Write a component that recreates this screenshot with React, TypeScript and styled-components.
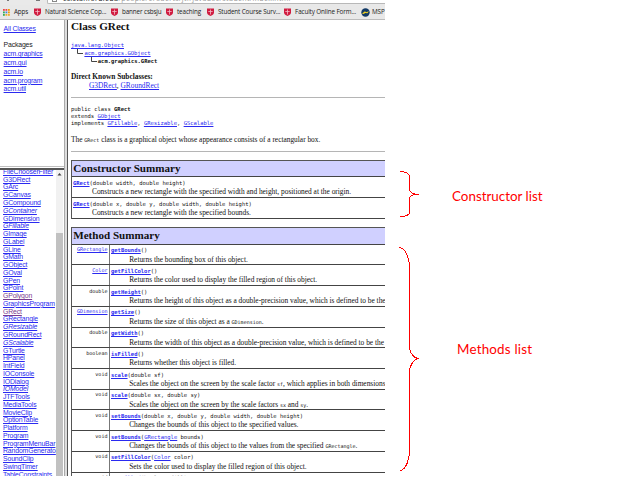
import React from "react";
import styled, { createGlobalStyle, css } from "styled-components";

const Global = createGlobalStyle`
  html, body { margin: 0; padding: 0; background: #fff; }
  body { width: 622px; height: 491px; overflow: hidden; }
  * { box-sizing: border-box; }
`;

const serif = `"Liberation Serif", "Times New Roman", serif`;
const sans = `"Liberation Sans", Arial, sans-serif`;
const mono = `"DejaVu Sans Mono", "Liberation Mono", monospace`;
const ui = `"Open Sans", "Noto Sans", sans-serif`;

const Page = styled.div`
  display: flex;
  position: relative;
  width: 622px;
  height: 491px;
  background: #fff;
  overflow: hidden;
`;
const Browser = styled.div`
  display: flex;
  flex-direction: column;
  width: 385px;
  height: 476px;
  overflow: hidden;
  flex: none;
`;
const AddressBar = styled.div`
  display: flex;
  align-items: flex-start;
  height: 5px;
  background: #e9e9e9;
  flex: none;
`;
const NavButtons = styled.div`
  display: flex;
  justify-content: space-between;
  width: 47px;
  padding: 0 7px;
  flex: none;
`;
const NavMark = styled.i<{ $w: number }>`
  width: ${(p) => p.$w}px;
  height: 1px;
  background: #777;
`;
const Field = styled.div`
  flex: 1;
  height: 4px;
  background: #fff;
  border: 1px solid #b8b8b8;
  border-width: 0 0 1px 1px;
  border-radius: 0 0 0 2px;
  overflow: hidden;
  display: flex;
  align-items: flex-end;
  gap: 6px;
  padding-left: 4px;
`;
const PageGlyph = styled.i`
  width: 5px;
  height: 2px;
  margin-bottom: 1px;
  border: 1px solid #888;
  border-top: 0;
  flex: none;
`;
const Url = styled.div`
  font: 7px/8px ${ui};
  letter-spacing: 0.32px;
  color: #999;
  white-space: nowrap;
  b { font-weight: 400; color: #222; }
`;
const Bookmarks = styled.div`
  display: flex;
  align-items: center;
  height: 15px;
  padding-left: 3px;
  background: #e8e8e8;
  border-bottom: 1px solid #bcbcbc;
  overflow: hidden;
  flex: none;
`;
const Bookmark = styled.div<{ $w: number; $gap?: number }>`
  display: flex;
  align-items: center;
  gap: ${(p) => p.$gap ?? 4}px;
  width: ${(p) => p.$w}px;
  flex: none;
  font: 6.3px/10px ${ui};
  letter-spacing: -0.12px;
  color: #222;
  white-space: nowrap;
  svg { flex: none; }
`;
const Frames = styled.div`
  display: flex;
  flex: 1;
  min-height: 0;
`;
const Sidebar = styled.div`
  display: flex;
  flex-direction: column;
  width: 64px;
  flex: none;
`;
const Divider = styled.div`
  width: 4px;
  flex: none;
  background: #ddd;
  border-left: 1px solid #aaa;
  border-right: 1px solid #555;
`;
const link = css`
  color: #2a2af0;
  text-decoration: underline;
  text-decoration-thickness: 1px;
  text-underline-offset: 0.5px;
`;
const Packages = styled.div`
  height: 147px;
  padding: 5.4px 0 0 3.6px;
  font: 6.9px/8.8px ${sans};
  letter-spacing: -0.17px;
  color: #222;
  border-bottom: 1px solid #c0c0c0;
  overflow: hidden;
`;
const PackageLink = styled.div<{ $gap?: number }>`
  ${link}
  width: max-content;
  margin-bottom: ${(p) => p.$gap ?? 0}px;
`;
const Classes = styled.div`
  display: flex;
  flex: 1;
  min-height: 0;
  margin-top: 1px;
  border-top: 2px solid #555;
`;
const ClassList = styled.div`
  width: 56px;
  padding-left: 3px;
  overflow: hidden;
  font: 6.9px/7.78px ${sans};
  letter-spacing: -0.14px;
`;
const ClassLink = styled.div<{ $italic?: boolean; $visited?: boolean }>`
  ${link}
  width: max-content;
  height: 7.78px;
  white-space: nowrap;
  font-style: ${(p) => (p.$italic ? "italic" : "normal")};
  color: ${(p) => (p.$visited ? "#7a3a90" : "#2a2af0")};
  &:first-child { margin-top: -2.1px; }
`;
const Scrollbar = styled.div`
  width: 7px;
  background: #f1f1f1;
  display: flex;
  flex-direction: column;
  align-items: center;
`;
const Thumb = styled.div`
  flex: 1;
  width: 7px;
  margin-top: 56px;
  background: #c1c1c1;
`;
const Doc = styled.main`
  flex: 1;
  min-width: 0;
  overflow: hidden;
  padding-left: 3px;
  font: 7.39px/8.4px ${serif};
  color: #111;
  white-space: nowrap;
`;
const Title = styled.h1`
  margin: 0;
  height: 21.4px;
  font: bold 11.15px/13px ${serif};
`;
const Tree = styled.div`
  height: 30.5px;
  font: 5.5px/8px ${mono};
`;
const TreeRow = styled.div<{ $indent: number; $bold?: boolean }>`
  display: flex;
  padding-left: ${(p) => p.$indent}px;
  font-weight: ${(p) => (p.$bold ? 700 : 400)};
  svg { flex: none; margin-right: 1px; }
`;
const A = styled.a`
  ${link}
`;
const Heading = styled.div`
  font-weight: bold;
  line-height: 9px;
`;
const Sub = styled.div`
  padding-left: 18px;
  height: 16.1px;
  line-height: 9px;
`;
const Rule = styled.hr`
  margin: 0;
  height: 1px;
  border: 0;
  background: #b5b5b5;
`;
const Signature = styled.div`
  padding-top: 8px;
  height: 37.5px;
  font: 5.5px/7.2px ${mono};
`;
const Para = styled.div`
  height: 15.5px;
  line-height: 9px;
`;
const Code = styled.code`
  font: 5px/6px ${mono};
`;
const Table = styled.section<{ $top: number }>`
  margin-top: ${(p) => p.$top}px;
  border: solid #555;
  border-width: 1px 0 0 1px;
`;
const TableHead = styled.h2`
  margin: 0;
  height: 16.4px;
  padding-left: 1.2px;
  background: #d0d0ff;
  border-bottom: 1px solid #444;
  font: bold 11.1px/15px ${serif};
`;
const Row = styled.div`
  display: flex;
  height: 20.72px;
  border-bottom: 1px solid #444;
`;
const Type = styled.div`
  width: 38px;
  flex: none;
  padding: 1.5px 1.5px 0 0;
  border-right: 1px solid #777;
  text-align: right;
  font: 5.07px/6px ${mono};
`;
const Detail = styled.div`
  padding: 2.5px 0 0 1px;
  flex: 1;
`;
const Member = styled.div`
  font: 5.5px/7.5px ${mono};
  a:first-child { font-weight: bold; }
`;
const Desc = styled.div<{ $indent?: number }>`
  padding-left: ${(p) => p.$indent ?? 18.2}px;
  line-height: 9px;
`;
const Notes = styled.aside`
  flex: 1;
  display: flex;
  flex-direction: column;
  padding: 188px 0 0 67px;
  gap: 137px;
  font: 13.4px/16px Lato, "Open Sans", sans-serif;
  color: #f00;
`;
const Note = styled.div<{ $x: number; $track: number }>`
  padding-left: ${(p) => p.$x}px;
  letter-spacing: ${(p) => p.$track}px;
  white-space: nowrap;
`;
const Braces = styled.svg`
  position: absolute;
  left: 395px;
  top: 165px;
  pointer-events: none;
`;

const Shield = () => (
  <svg width="7" height="8" viewBox="0 0 7 8">
    <path d="M0 .5h7v4Q7 6.5 3.5 8 0 6.5 0 4.5z" fill="#d01c40" />
    <path d="M3.5 1.5v5M1.3 3.5h4.4" stroke="#f5b8c4" strokeWidth=".8" />
  </svg>
);
const AppsIcon = () => (
  <svg width="7" height="7" viewBox="0 0 7 7">
    {["#e44", "#e44", "#e90", "#3a5", "#48d", "#e90", "#3a5", "#ea2", "#ea2"].map((c, i) => (
      <rect key={i} x={(i % 3) * 2.5} y={Math.floor(i / 3) * 2.5} width="1.8" height="1.8" fill={c} />
    ))}
  </svg>
);
const Globe = () => (
  <svg width="9" height="9" viewBox="0 0 9 9">
    <circle cx="4.5" cy="4.5" r="4.2" fill="#123a66" />
    <path d="M1 5.5 4 3.2l1 1 3-1-1.6 2-2-.3L2.5 6z" fill="#f0d020" />
  </svg>
);
const Elbow = () => (
  <svg width="6" height="8" viewBox="0 0 6 8">
    <path d="M.5 0v4.5H6" fill="none" stroke="#444" />
  </svg>
);

const packages = ["acm.graphics", "acm.gui", "acm.io", "acm.program", "acm.util"];
// A leading asterisk marks an interface, which is listed in italics.
const classes =
  "FileChooserFilter G3DRect GArc GCanvas GCompound *GContainer GDimension *GFillable GImage GLabel GLine GMath GObject GOval GPen GPoint GPolygon GraphicsProgram GRect GRectangle *GResizable GRoundRect *GScalable GTurtle HPanel IntField IOConsole IODialog *IOModel JTFTools MediaTools MovieClip OptionTable Platform Program ProgramMenuBar RandomGenerato SoundClip SwingTimer TableConstraints".split(" ");

type Method = { type: React.ReactNode; name: string; args: React.ReactNode; desc: React.ReactNode };
const methods: Method[] = [
  { type: <A>GRectangle</A>, name: "getBounds", args: "()", desc: "Returns the bounding box of this object." },
  { type: <A>Color</A>, name: "getFillColor", args: "()", desc: "Returns the color used to display the filled region of this object." },
  { type: "double", name: "getHeight", args: "()", desc: "Returns the height of this object as a double-precision value, which is defined to be the" },
  { type: <A>GDimension</A>, name: "getSize", args: "()", desc: <>Returns the size of this object as a <Code>GDimension</Code>.</> },
  { type: "double", name: "getWidth", args: "()", desc: "Returns the width of this object as a double-precision value, which is defined to be the" },
  { type: "boolean", name: "isFilled", args: "()", desc: "Returns whether this object is filled." },
  { type: "void", name: "scale", args: "(double sf)", desc: <>Scales the object on the screen by the scale factor <Code>sf</Code>, which applies in both dimensions</> },
  { type: "void", name: "scale", args: "(double sx, double sy)", desc: <>Scales the object on the screen by the scale factors <Code>sx</Code> and <Code>sy</Code>.</> },
  { type: "void", name: "setBounds", args: "(double x, double y, double width, double height)", desc: "Changes the bounds of this object to the specified values." },
  { type: "void", name: "setBounds", args: <>(<A>GRectangle</A> bounds)</>, desc: <>Changes the bounds of this object to the values from the specified <Code>GRectangle</Code>.</> },
  { type: "void", name: "setFillColor", args: <>(<A>Color</A> color)</>, desc: "Sets the color used to display the filled region of this object." },
  { type: "void", name: "setFilled", args: "(boolean fill)", desc: "" },
];

export default function App() {
  return (
    <>
      <Global />
      <Page>
        <Browser>
          <AddressBar>
            <NavButtons>
              <NavMark $w={2} />
              <NavMark $w={4} />
            </NavButtons>
            <Field>
              <PageGlyph />
              <Url><b>cs.stanford.edu</b>/people/eroberts/jtf/javadoc/student/index.html</Url>
            </Field>
          </AddressBar>
          <Bookmarks>
            <Bookmark $w={31}><AppsIcon />Apps</Bookmark>
            <Bookmark $w={77}><Shield />Natural Science Cop...</Bookmark>
            <Bookmark $w={55}><Shield />banner csbsju</Bookmark>
            <Bookmark $w={41}><Shield />teaching</Bookmark>
            <Bookmark $w={77}><Shield />Student Course Surv...</Bookmark>
            <Bookmark $w={77}><Shield />Faculty Online Form...</Bookmark>
            <Bookmark $w={26} $gap={2}><Globe />MSP</Bookmark>
          </Bookmarks>
          <Frames>
            <Sidebar>
              <Packages>
                <PackageLink $gap={7.2}>All Classes</PackageLink>
                <div>Packages</div>
                {packages.map((p) => <PackageLink key={p}>{p}</PackageLink>)}
              </Packages>
              <Classes>
                <ClassList>
                  {classes.map((c) => (
                    <ClassLink key={c} $italic={c[0] === "*"} $visited={c === "GPolygon" || c === "GRect"}>
                      {c.replace("*", "")}
                    </ClassLink>
                  ))}
                </ClassList>
                <Scrollbar>
                  <svg width="5" height="7" viewBox="0 0 5 7"><path d="M.5 5.5h4L2.5 3z" fill="#444" /></svg>
                  <Thumb />
                </Scrollbar>
              </Classes>
            </Sidebar>
            <Divider />
            <Doc>
              <Title>Class GRect</Title>
              <Tree>
                <TreeRow $indent={0}><A>java.lang.Object</A></TreeRow>
                <TreeRow $indent={6.4}><Elbow /><A>acm.graphics.GObject</A></TreeRow>
                <TreeRow $indent={19.8} $bold><Elbow />acm.graphics.GRect</TreeRow>
              </Tree>
              <Heading>Direct Known Subclasses:</Heading>
              <Sub><A>G3DRect</A>, <A>GRoundRect</A></Sub>
              <Rule />
              <Signature>
                public class <b>GRect</b><br />
                extends <A>GObject</A><br />
                implements <A>GFillable</A>, <A>GResizable</A>, <A>GScalable</A>
              </Signature>
              <Para>The <Code>GRect</Code> class is a graphical object whose appearance consists of a rectangular box.</Para>
              <Rule />
              <Table $top={8}>
                <TableHead>Constructor Summary</TableHead>
                <Row><Detail><Member><A>GRect</A>(double width, double height)</Member><Desc $indent={19}>Constructs a new rectangle with the specified width and height, positioned at the origin.</Desc></Detail></Row>
                <Row><Detail><Member><A>GRect</A>(double x, double y, double width, double height)</Member><Desc $indent={19}>Constructs a new rectangle with the specified bounds.</Desc></Detail></Row>
              </Table>
              <Table $top={8.5}>
                <TableHead>Method Summary</TableHead>
                {methods.map((m, i) => (
                  <Row key={i}>
                    <Type>{m.type}</Type>
                    <Detail>
                      <Member><A>{m.name}</A>{m.args}</Member>
                      <Desc>{m.desc}</Desc>
                    </Detail>
                  </Row>
                ))}
              </Table>
            </Doc>
          </Frames>
        </Browser>
        <Notes>
          <Note $x={0} $track={0}>Constructor list</Note>
          <Note $x={5} $track={0.2}>Methods list</Note>
        </Notes>
        <Braces width="30" height="312" viewBox="395 165 30 312" fill="none" stroke="#f00" strokeWidth="1" shapeRendering="crispEdges">
          <path d="M399.5 171.5Q409.5 171.5 409.5 177V189Q409.5 194.3 419 194.3Q409.5 194.3 409.5 199V212Q409.5 216.5 400 216.5" />
          <path d="M399.5 247.5C406 248.5 409.5 259 409.5 267V347C409.5 353 414 358.5 419 358.5C414 358.5 409.5 366 409.5 371V451C409.5 459 406 470 400 470.5" />
        </Braces>
      </Page>
    </>
  );
}
